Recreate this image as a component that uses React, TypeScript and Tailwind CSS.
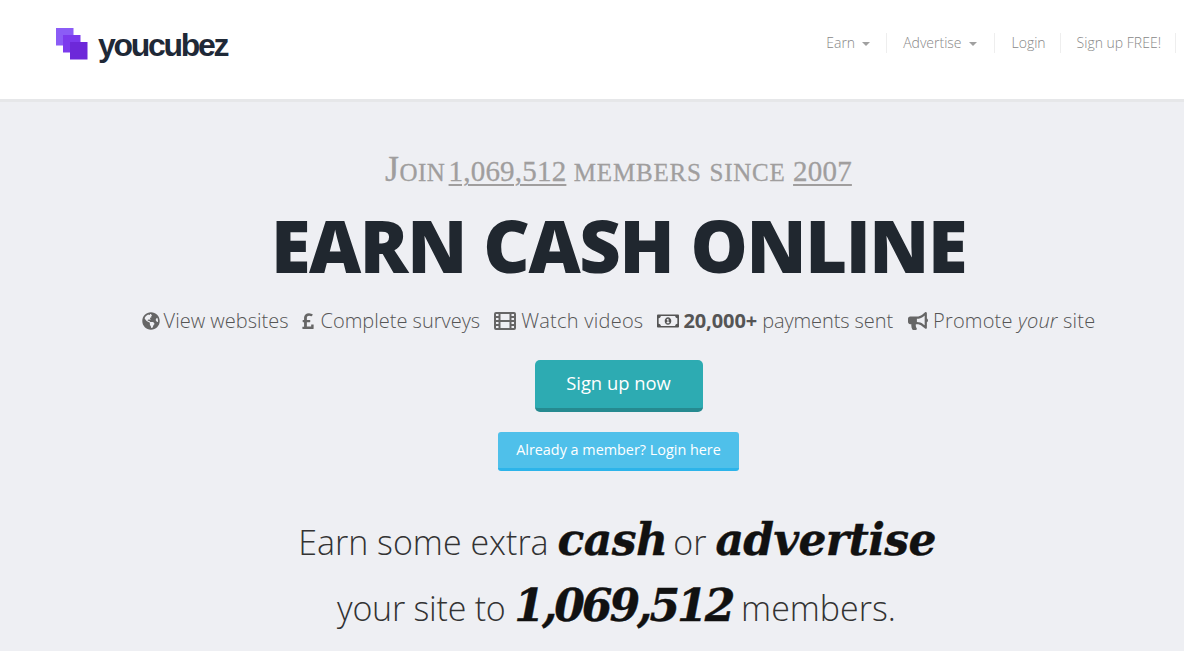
import React from "react";
import { FaGlobeAmericas, FaPoundSign, FaRegMoneyBillAlt, FaBullhorn } from "react-icons/fa";

const sans = "font-['Open_Sans',sans-serif]";
const fancy =
  "font-['DejaVu_Serif',serif] text-[44px] font-bold italic leading-none text-[#111111] [-webkit-text-stroke:0.4px_#111111]";
const digits = "text-[29px] tracking-[0.2px] underline decoration-2 underline-offset-[3px]";

const NavItem = ({ label, caret, className }: { label: string; caret?: boolean; className: string }) => (
  <div className={`flex h-5 items-center border-r border-[#eeeeee] ${className}`}>
    <span className="text-sm font-light text-[#888888]">{label}</span>
    {caret && <span className="ml-[7px] mt-0.5 h-0 w-0 border-x-4 border-t-4 border-x-transparent border-t-[#a0a0a0]" />}
  </div>
);

const FilmIcon = () => (
  <svg width="22" height="20" viewBox="0 0 22 20" fill="none" stroke="#666666" strokeWidth="2">
    <rect x="1" y="2" width="20" height="16" rx="1" />
    <path d="M5.5 2v16M16.5 2v16M5.5 10h11M1 6h4.500M1 10h4.500M1 14h4.500M16.500 6H21M16.500 10H21M16.500 14H21" />
  </svg>
);

const Feature = ({ icon, className, children }: { icon: React.ReactNode; className: string; children: React.ReactNode }) => (
  <div className={`flex items-center ${className}`}>
    {icon}
    <span>{children}</span>
  </div>
);

const App: React.FC = () => {
  return (
    <div className={`h-[651px] w-[1184px] overflow-hidden bg-[#eeeff3] ${sans}`}>
      {/* Header */}
      <header className="flex h-[102px] items-center justify-between border-b-[3px] border-[#e6e7e9] bg-white pb-[11px] pl-[56px] pr-[8px]">
        <div className="flex items-center gap-[10px]">
          <svg width="32" height="32" viewBox="0 0 32 32">
            <rect x="0" y="0" width="17.500" height="17.500" fill="#8b5cf6" />
            <rect x="7" y="7" width="17.500" height="17.500" fill="#7c3aed" />
            <rect x="14" y="14" width="17.500" height="17.500" fill="#6d28d9" />
          </svg>
          <span className="mt-[2px] font-['Liberation_Sans',sans-serif] text-[32px] font-bold leading-none tracking-[-2.3px] text-[#1f2937]">
            youcubez
          </span>
        </div>
        <nav className="mb-[2px] flex items-center">
          <NavItem label="Earn" caret className="pl-4 pr-4" />
          <NavItem label="Advertise" caret className="pl-4 pr-[17px]" />
          <NavItem label="Login" className="pl-[17px] pr-[14px]" />
          <NavItem label="Sign up FREE!" className="pl-4 pr-[14px]" />
        </nav>
      </header>

      {/* Hero */}
      <main className="flex flex-col items-center pl-[53px]">
        <h2 className="mt-[47px] font-['Liberation_Serif',serif] text-[36px] leading-[40px] tracking-[0.4px] text-[#a09e9e] [-webkit-text-stroke:0.3px_#a09e9e] [font-variant:small-caps] [word-spacing:-2px]">
          Join <span className={`${digits} ml-[-4px]`}>1,069,512</span>{" "}
          <span className="tracking-[0.8px]">members since</span> <span className={digits}>2007</span>
        </h2>
        <h1 className="mt-[10px] text-[72px] font-extrabold uppercase leading-[88px] tracking-[-1.4px] text-[#20272f]">
          Earn cash online
        </h1>
        <div className="mt-[18px] flex items-center text-xl font-light leading-[28px] text-[#555555]">
          <Feature className="gap-[4px]" icon={<FaGlobeAmericas className="text-[18px] text-[#666666]" />}>
            View websites
          </Feature>
          <Feature className="ml-[11px] gap-[3px]" icon={<FaPoundSign className="text-[18px] text-[#666666]" />}>
            Complete surveys
          </Feature>
          <Feature className="ml-[14px] gap-[5px] tracking-[0.25px]" icon={<FilmIcon />}>
            Watch videos
          </Feature>
          <Feature className="ml-[14px] gap-[4px] tracking-[-0.1px]" icon={<FaRegMoneyBillAlt className="text-[22px] text-[#555555]" />}>
            <b className="font-bold">20,000+</b> payments sent
          </Feature>
          <Feature className="ml-[15px] gap-[5px] tracking-[0.2px]" icon={<FaBullhorn className="text-[20px] text-[#666666]" />}>
            Promote <i>your</i> site
          </Feature>
        </div>
        <button className="mt-[25px] h-[52px] w-[168px] rounded-[5px] border-b-4 border-[#268a90] bg-[#2dabb2] pb-[2px] text-[18.4px] text-white">
          Sign up now
        </button>
        <button className="mt-5 h-[39px] w-[241px] rounded-[3px] border-b-[3px] border-[#2cb4ea] bg-[#4fc0ea] text-[14.4px] text-white">
          Already a member? Login here
        </button>
        <p className="mr-[3px] mt-[46px] text-[34px] font-light leading-[50px] text-[#333333]">
          Earn some extra <b className={`${fancy} mr-[-3px] tracking-[-0.5px]`}>cash</b> or{" "}
          <b className={`${fancy} tracking-[-0.6px]`}>advertise</b>
        </p>
        <p className="mr-[4px] mt-[16px] text-[34px] font-light leading-[50px] text-[#333333]">
          <span className="tracking-[-0.25px]">your site to</span>{" "}
          <b className={`${fancy} tracking-[-3px]`}>1,069,512</b> members.
        </p>
      </main>
    </div>
  );
};

export default App;
